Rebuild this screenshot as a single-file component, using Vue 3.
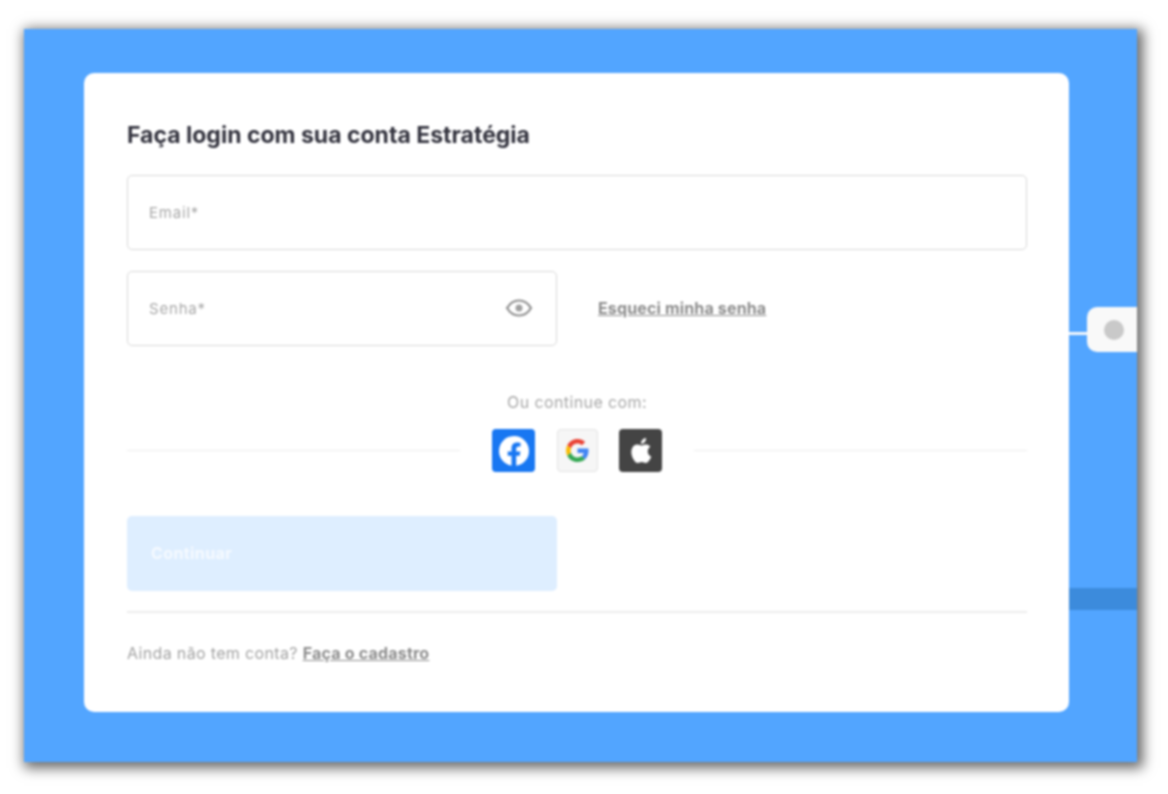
<script setup>
const title = 'Faça login com sua conta Estratégia'
</script>

<template>
  <div class="page">
    <div class="window">
      <div class="band"></div>
      <div class="connector"></div>
      <div class="tab"><span class="dot"></span></div>
      <main class="card">
        <h1 class="title">{{ title }}</h1>
        <div class="field field-full"><span class="placeholder">Email*</span></div>
        <div class="row">
          <div class="field field-half">
            <span class="placeholder">Senha*</span>
            <svg class="eye" viewBox="0 0 28 20" width="28" height="20" fill="none" stroke="#8f8f8f" stroke-width="2.200">
              <path d="M2 10C5 5 9 2.500 14 2.500S23 5 26 10C23 15 19 17.500 14 17.500S5 15 2 10Z" />
              <circle cx="14" cy="10" r="3.500" fill="#a0a0a0" stroke="none" />
            </svg>
          </div>
          <a class="link forgot">Esqueci minha senha</a>
        </div>
        <p class="or">Ou continue com:</p>
        <div class="social">
          <span class="rule"></span>
          <div class="icons">
            <span class="ico fb">
              <svg viewBox="0 0 32 32" width="32" height="32">
                <circle cx="16" cy="16" r="15" fill="#fff" />
                <path fill="#1877f2" d="M18.200 31V20.700h3.500l.7-4.300h-4.200v-2.600c0-1.300.6-2.300 2.400-2.300h1.900V7.900s-1.700-.3-3.400-.3c-3.400 0-5.600 2.100-5.600 5.800v3h-3.800v4.300h3.800V31z" />
              </svg>
            </span>
            <span class="ico go">
              <svg viewBox="0 0 48 48" width="23" height="23">
                <path fill="#ea4335" d="M24 9.500c3.500 0 6.700 1.200 9.200 3.600l6.800-6.800C35.900 2.400 30.500 0 24 0 14.600 0 6.500 5.400 2.600 13.200l8 6.200C12.400 13.700 17.700 9.500 24 9.500z" />
                <path fill="#4285f4" d="M47 24.500c0-1.600-.2-3.100-.4-4.500H24v9h12.900c-.6 3-2.200 5.500-4.700 7.200l7.700 6C44.400 37.600 47 31.600 47 24.500z" />
                <path fill="#fbbc05" d="M10.500 28.600c-.5-1.400-.8-3-.8-4.600s.3-3.200.8-4.600l-8-6.200C.9 16.500 0 20.100 0 24s.9 7.500 2.600 10.800z" />
                <path fill="#34a853" d="M24 48c6.500 0 11.900-2.100 15.900-5.800l-7.700-6c-2.200 1.400-4.900 2.300-8.200 2.300-6.300 0-11.600-4.200-13.500-9.900l-8 6.200C6.500 42.600 14.600 48 24 48z" />
              </svg>
            </span>
            <span class="ico ap">
              <svg viewBox="0 0 24 24" width="31" height="31">
                <path fill="#fff" d="M17.600 12.600c0-2.300 1.900-3.400 2-3.500-1.100-1.600-2.800-1.800-3.400-1.800-1.400-.2-2.800.9-3.500.9-.7 0-1.900-.8-3.100-.8-1.600 0-3.100.9-3.900 2.400-1.700 2.900-.4 7.200 1.200 9.500.8 1.200 1.800 2.400 3 2.400 1.200 0 1.700-.8 3.100-.8s1.900.8 3.100.8c1.300 0 2.100-1.100 2.900-2.300.9-1.300 1.300-2.600 1.300-2.700 0 0-2.700-1-2.700-4.100zM15.300 5.400c.7-.8 1.100-1.900 1-3.100-1 0-2.200.7-2.900 1.500-.6.700-1.200 1.900-1 3 1.100.1 2.200-.6 2.900-1.400z" />
              </svg>
            </span>
          </div>
          <span class="rule"></span>
        </div>
        <button class="submit" type="button">Continuar</button>
        <div class="sep"></div>
        <p class="foot">Ainda não tem conta? <a class="link cta">Faça o cadastro</a></p>
      </main>
    </div>
  </div>
</template>

<style>
html, body { margin: 0; background: #fff; }
</style>

<style scoped>
.page {
  width: 1168px;
  height: 794px;
  padding: 29px 0 0 24px;
  box-sizing: border-box;
  overflow: hidden;
  font-family: Inter, "Open Sans", sans-serif;
  filter: blur(0.9px);
}
.window {
  position: relative;
  width: 1113px;
  height: 733px;
  background: #52a5ff;
  padding: 44px 0 0 60px;
  box-sizing: border-box;
  box-shadow: 3px 3px 12px 3px rgba(0, 0, 0, 0.6);
}
.band {
  position: absolute;
  left: 1045px;
  top: 559px;
  width: 68px;
  height: 22px;
  background: #3c8bdc;
}
.connector {
  position: absolute;
  left: 1045px;
  top: 303px;
  width: 20px;
  height: 3px;
  background: #f4f8fc;
}
.tab {
  position: absolute;
  left: 1063px;
  top: 278px;
  width: 50px;
  height: 45px;
  background: #f9f9f9;
  border-radius: 10px 0 0 10px;
  display: flex;
  align-items: center;
  padding-left: 17px;
  box-sizing: border-box;
}
.dot {
  width: 20px;
  height: 20px;
  border-radius: 50%;
  background: #c9c9c9;
}
.card {
  width: 985px;
  height: 639px;
  box-sizing: border-box;
  background: #fff;
  border-radius: 10px;
  padding: 48px 43px 0;
}
.title {
  margin: 0 0 26px;
  font-size: 23px;
  line-height: 28px;
  font-weight: 700;
  color: #34343f;
}
.field {
  height: 75px;
  box-sizing: border-box;
  border: 1.500px solid #d9d9d9;
  border-radius: 5px;
  display: flex;
  align-items: center;
  justify-content: space-between;
  padding: 0 23px 0 21px;
}
.eye { margin-bottom: 2px; }
.field-full { width: 900px; }
.field-half { width: 430px; }
.placeholder {
  font-size: 15px;
  letter-spacing: 0.800px;
  color: #a8a8a8;
}
.row {
  display: flex;
  align-items: center;
  gap: 41px;
  margin-top: 21px;
}
.link {
  color: #8c8c8c;
  font-weight: 700;
  text-decoration: underline;
}
.forgot {
  font-size: 16px;
  letter-spacing: 0.150px;
  margin-bottom: 2px;
}
.or {
  margin: 46px 0 0;
  width: 900px;
  text-align: center;
  font-size: 16px;
  letter-spacing: 0.400px;
  line-height: 20px;
  color: #a8a8a8;
}
.social {
  width: 900px;
  display: flex;
  align-items: center;
  gap: 32px;
  margin-top: 17px;
}
.rule {
  flex: 1;
  height: 1.500px;
  background: #ececec;
}
.icons {
  display: flex;
  gap: 21.500px;
}
.ico {
  width: 43px;
  height: 43px;
  border-radius: 4px;
  display: flex;
  align-items: center;
  justify-content: center;
  box-sizing: border-box;
}
.fb { background: #1877f2; }
.go { width: 41px; background: #f6f6f6; border: 1.500px solid #e3e3e3; }
.ap { background: #444; }
.submit {
  display: block;
  width: 430px;
  height: 75px;
  margin-top: 44px;
  padding: 0 0 2px 24px;
  border: 0;
  border-radius: 5px;
  background: #deeeff;
  color: #f6faff;
  text-align: left;
  font-family: inherit;
  font-size: 16px;
  letter-spacing: 0.400px;
  font-weight: 700;
}
.sep {
  width: 900px;
  height: 1.500px;
  background: #ececec;
  margin-top: 20px;
}
.foot {
  margin: 29px 0 0;
  font-size: 16px;
  letter-spacing: 0.350px;
  line-height: 22px;
  color: #a3a3a3;
}
.cta {
  letter-spacing: 0.200px;
}
</style>
